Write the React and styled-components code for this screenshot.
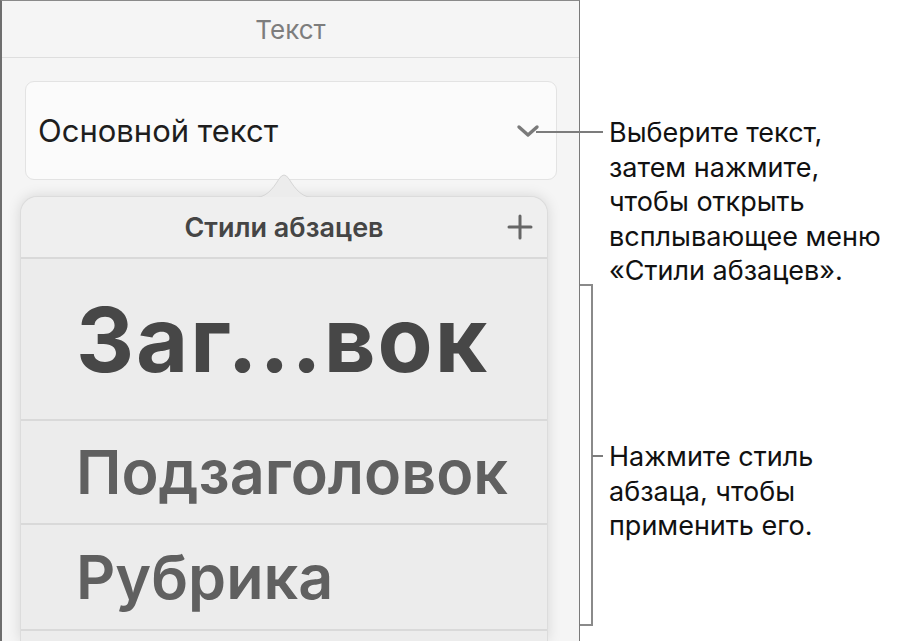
import React from "react";
import styled, { createGlobalStyle } from "styled-components";

const GlobalStyle = createGlobalStyle`
  html, body {
    margin: 0;
    padding: 0;
    background: #ffffff;
  }
  body {
    font-family: Inter, "Noto Sans", "Liberation Sans", sans-serif;
  }
`;

// P A G E
const Page = styled.div`
  display: flex;
  width: 897px;
  height: 641px;
  overflow: hidden;
  background: #ffffff;
`;

// P A N E L
const Panel = styled.div`
  box-sizing: border-box;
  width: 580px;
  flex-shrink: 0;
  display: flex;
  flex-direction: column;
  background: #f5f5f5;
  border-left: 2px solid #6e6e6e;
  border-top: 1px solid #8a8a8a;
  border-right: 1px solid #7a7a7a;
`;

const PanelHeader = styled.div`
  height: 56px;
  display: flex;
  align-items: center;
  justify-content: center;
  border-bottom: 1px solid #dedede;
  font-size: 26px;
  color: #7d7d7d;
`;

const StyleButton = styled.div`
  box-sizing: border-box;
  height: 99px;
  margin: 23px 22px 0 23px;
  padding: 0 16px 0 12px;
  display: flex;
  align-items: center;
  justify-content: space-between;
  background: #fbfbfb;
  border: 1px solid #e3e3e3;
  border-radius: 9px;
  font-size: 31px;
  color: #1e1e1e;
`;

const Popover = styled.div`
  position: relative;
  margin: 16px 31px 0 18px;
  background: #ececec;
  border: 1px solid #dcdcdc;
  border-bottom: none;
  border-radius: 17px 17px 0 0;
  box-shadow: 0 0 14px rgba(0, 0, 0, 0.13);
  flex: 1;
`;

// the little pointer above the popover, drawn as a curve
const Pointer = styled.svg`
  position: absolute;
  left: 50%;
  top: -25px;
  margin-left: -32px;
  overflow: visible;
`;

const PopoverHeader = styled.div`
  position: relative;
  height: 60px;
  display: grid;
  grid-template-columns: 1fr auto 1fr;
  align-items: center;
  border-bottom: 2px solid #d9d9d9;
  background: #efefef;
  border-radius: 17px 17px 0 0;
  font-size: 27px;
  font-weight: 600;
  color: #454545;
`;

const HeaderTitle = styled.div`
  grid-column: 2;
`;

const AddButton = styled.div`
  grid-column: 3;
  justify-self: end;
  margin-right: 14px;
  display: flex;
`;

const StyleRow = styled.div`
  box-sizing: border-box;
  height: ${({ $h }) => $h}px;
  display: flex;
  align-items: center;
  padding-left: 55px;
  border-bottom: 2px solid #d9d9d9;
  font-size: ${({ $size }) => $size}px;
  font-weight: ${({ $weight }) => $weight};
  color: ${({ $color }) => $color};
  letter-spacing: ${({ $track }) => $track || "0"};
  white-space: nowrap;
`;

// A N N O T A T I O N S
const Notes = styled.div`
  display: flex;
  flex-direction: column;
  padding-top: 116px;
`;

const Callout = styled.div`
  display: flex;
  align-items: flex-start;
  height: 168px;
`;

const Leader = styled.div`
  flex-shrink: 0;
  width: ${({ $w }) => $w}px;
  height: 2px;
  margin: 15px 6px 0 ${({ $ml }) => $ml}px;
  background: #7c7c7c;
`;

const NoteText = styled.div`
  font-size: 27px;
  line-height: 34.5px;
  color: #111111;
  white-space: nowrap;
`;

const BracketGroup = styled.div`
  display: flex;
  height: 342px;
`;

const Bracket = styled.div`
  box-sizing: border-box;
  width: 13px;
  flex-shrink: 0;
  border: 2px solid #8a8a8a;
  border-left: none;
`;

const BracketNote = styled.div`
  display: flex;
  align-items: flex-start;
  margin-top: 156px;
`;

const Chevron = () => (
  <svg width="24" height="14" viewBox="0 0 24 14">
    <polyline
      points="3,3 12,11 21,3"
      fill="none"
      stroke="#7a7a7a"
      strokeWidth="3.4"
      strokeLinecap="round"
      strokeLinejoin="round"
    />
  </svg>
);

const Plus = () => (
  <svg width="26" height="26" viewBox="0 0 26 26">
    <path
      d="M13 2 V24 M2 13 H24"
      stroke="#666666"
      strokeWidth="3"
      strokeLinecap="round"
    />
  </svg>
);

const curve = "M0 26 C14 26 20 18 27 7 Q32 -1 37 7 C44 18 50 26 64 26";

export default function App() {
  return (
    <>
      <GlobalStyle />
      <Page>
        <Panel>
          <PanelHeader>Текст</PanelHeader>
          <StyleButton>
            <span>Основной текст</span>
            <Chevron />
          </StyleButton>
          <Popover>
            <Pointer width="64" height="27" viewBox="0 0 64 27">
              <path d={curve + " Z"} fill="#ececec" />
              <path d={curve} fill="none" stroke="#d6d6d6" strokeWidth="1" />
            </Pointer>
            <PopoverHeader>
              <HeaderTitle>Стили абзацев</HeaderTitle>
              <AddButton>
                <Plus />
              </AddButton>
            </PopoverHeader>
            <StyleRow
              $h={162}
              $size={90}
              $weight={700}
              $color="#474747"
              $track="2px"
            >
              Заг...вок
            </StyleRow>
            <StyleRow $h={104} $size={61} $weight={600} $color="#606060">
              Подзаголовок
            </StyleRow>
            <StyleRow $h={106} $size={61} $weight={600} $color="#606060">
              Рубрика
            </StyleRow>
          </Popover>
        </Panel>
        <Notes>
          <Callout>
            <Leader $w={67} $ml={-44} />
            <NoteText>
              Выберите текст,
              <br />
              затем нажмите,
              <br />
              чтобы открыть
              <br />
              всплывающее меню
              <br />
              «Стили абзацев».
            </NoteText>
          </Callout>
          <BracketGroup>
            <Bracket />
            <BracketNote>
              <Leader $w={11} $ml={-1} />
              <NoteText>
                Нажмите стиль
                <br />
                абзаца, чтобы
                <br />
                применить его.
              </NoteText>
            </BracketNote>
          </BracketGroup>
        </Notes>
      </Page>
    </>
  );
}
